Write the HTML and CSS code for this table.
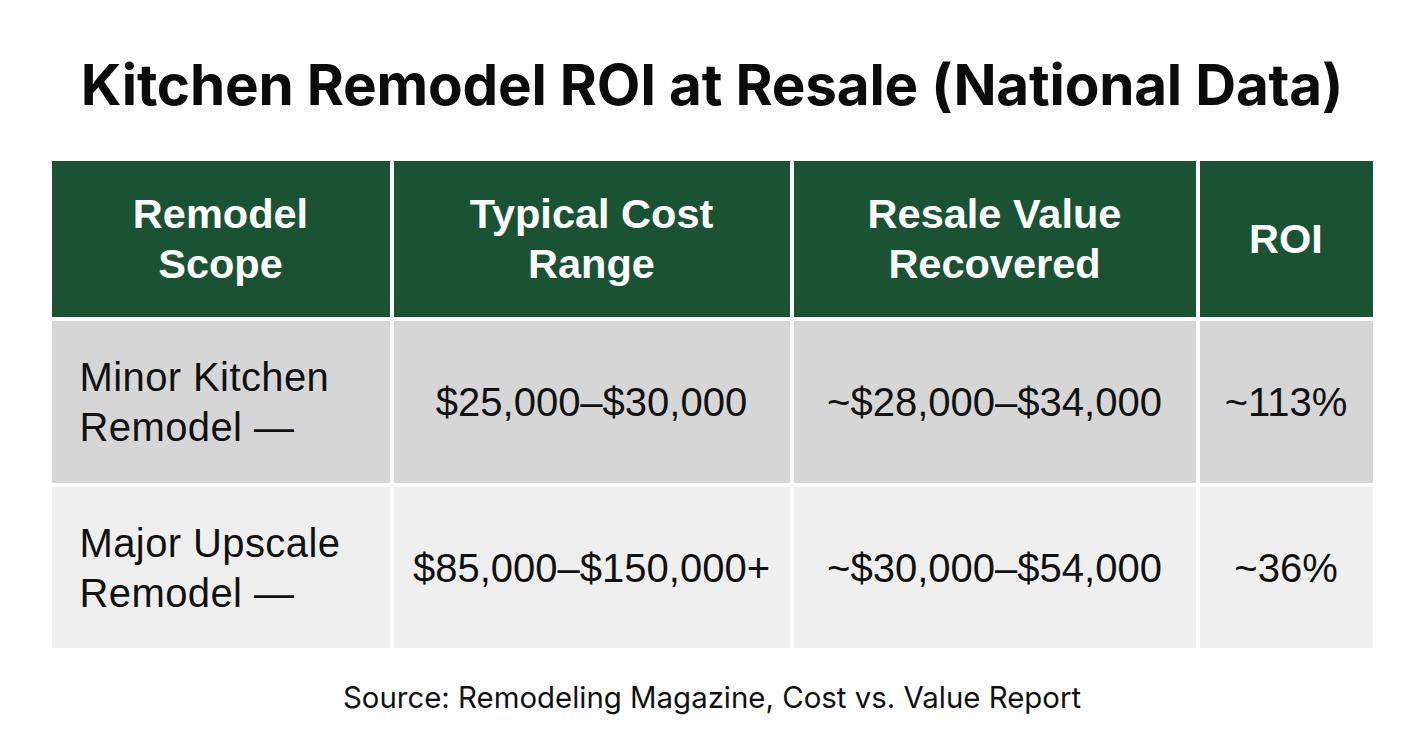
FILE: index.html
```html
<!DOCTYPE html>
<html lang="en">
<head>
<meta charset="utf-8">
<title>Kitchen Remodel ROI at Resale</title>
<link rel="stylesheet" href="styles.css">
</head>
<body>
<main class="page">
  <h1 class="title">Kitchen Remodel ROI at Resale (National Data)</h1>
  <div class="table">
    <div class="cell head">Remodel<br>Scope</div>
    <div class="cell head">Typical Cost<br>Range</div>
    <div class="cell head">Resale Value<br>Recovered</div>
    <div class="cell head">ROI</div>

    <div class="cell row1 first">Minor Kitchen<br>Remodel —</div>
    <div class="cell row1">$25,000–$30,000</div>
    <div class="cell row1">~$28,000–$34,000</div>
    <div class="cell row1">~113%</div>

    <div class="cell row2 first">Major Upscale<br>Remodel —</div>
    <div class="cell row2">$85,000–$150,000+</div>
    <div class="cell row2">~$30,000–$54,000</div>
    <div class="cell row2">~36%</div>
  </div>
  <p class="source">Source: Remodeling Magazine, Cost vs. Value Report</p>
</main>
</body>
</html>
```
FILE: styles.css
```css
* { box-sizing: border-box; }
html, body { margin: 0; padding: 0; background: #ffffff; }
body {
  font-family: "Liberation Sans", Arial, sans-serif;
  color: #111111;
  width: 1424px;
  height: 752px;
  overflow: hidden;
}
.page {
  display: flex;
  flex-direction: column;
  align-items: center;
  padding-top: 52px;
}
.title {
  margin: 0;
  font-family: Inter, "Liberation Sans", sans-serif;
  font-size: 56.6px;
  font-weight: 700;
  line-height: 66px;
  letter-spacing: -0.2px;
  color: #0b0b0b;
}
.table {
  margin-top: 43px;
  display: grid;
  grid-template-columns: 338px 396px 402px 173px;
  grid-template-rows: 156px 162px 161px;
  gap: 4px;
  background: #ffffff;
}
.cell {
  display: flex;
  align-items: center;
  justify-content: center;
  text-align: center;
  font-size: 40px;
  line-height: 50px;
}
.head {
  background: #1a5334;
  color: #ffffff;
  font-weight: 700;
  font-size: 41.5px;
}
.row1 { background: #d6d6d6; }
.row2 { background: #efefef; }
.first {
  justify-content: flex-start;
  text-align: left;
  padding-left: 28px;
  letter-spacing: 0.4px;
}
.source {
  margin: 33px 0 0;
  font-family: Inter, "Liberation Sans", sans-serif;
  font-size: 29.4px;
  line-height: 34px;
  color: #111111;
}
```
